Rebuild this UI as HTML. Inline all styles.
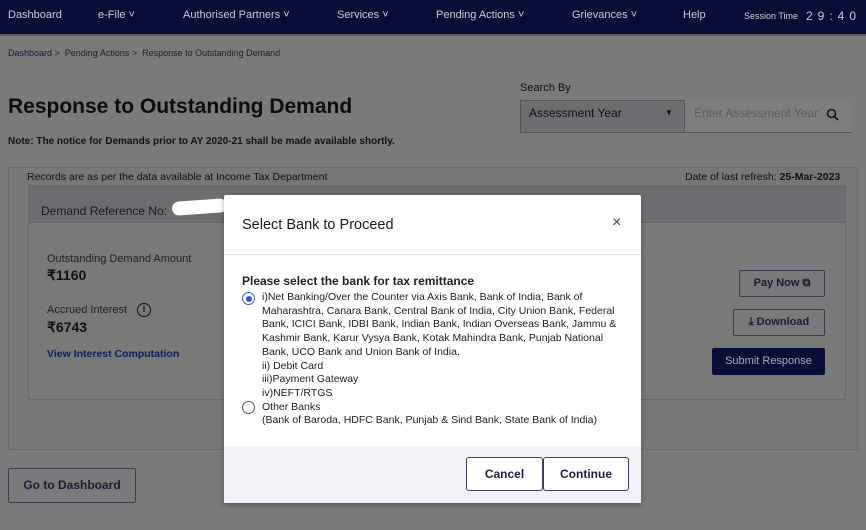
<!DOCTYPE html>
<html><head><meta charset="utf-8"><style>
*{box-sizing:border-box;margin:0;padding:0}
body{width:866px;height:530px;overflow:hidden;background:#7a7a7a;font-family:"Liberation Sans",sans-serif;color:#111;position:relative;font-size:11px}
.a{position:absolute;white-space:nowrap}
.nav{position:absolute;left:0;top:0;width:866px;height:34px;background:#0a0c38;color:#c9cbd6;font-size:11px}
.nav span{position:absolute;top:9px}
.panel{position:absolute;left:8px;top:167px;width:850px;height:283px;background:#777;border:1px solid #6c6c6c}
.card{position:absolute;left:28px;top:185px;width:818px;height:215px;border:1px solid #6a6a6a;background:#797979}
.ch{position:absolute;left:0;top:0;width:100%;height:37px;background:#6d6d71;border-bottom:1px solid #666}
.btn{position:absolute;border:1px solid #3a3d52;border-radius:2px;font-size:11px;font-weight:bold;color:#1a1d33;text-align:center}
.modal{position:absolute;left:224px;top:195px;width:417px;height:308px;background:#fff;border-radius:2px;box-shadow:0 2px 6px rgba(0,0,0,.3)}
.mf{position:absolute;left:0;top:251px;width:100%;height:57px;background:#f2f3f8}
.mb{position:absolute;top:262px;height:34px;border:1px solid #3b3f66;border-radius:3px;background:#fff;font-size:12px;font-weight:bold;color:#1b1f44;text-align:center;line-height:32px}
.radio{position:absolute;width:13px;height:13px;border:1px solid #555;border-radius:50%;background:#fff}
</style></head><body>
<div class="nav">
<span style="left:8px">Dashboard</span><span style="left:98px">e-File ˅</span><span style="left:183px">Authorised Partners ˅</span><span style="left:337px">Services ˅</span><span style="left:436px">Pending Actions ˅</span><span style="left:572px">Grievances ˅</span><span style="left:683px">Help</span><span style="left:744px;font-size:9px;top:11px">Session Time</span><span style="left:806px;font-size:12px;letter-spacing:5px">29:40</span>
</div>
<div style="position:absolute;left:0;top:34px;width:866px;height:2px;background:#5a5a68"></div>
<div class="a" style="left:8px;top:48px;font-size:9px;color:#222"><span style="color:#0e1a4a">Dashboard</span> &gt;&nbsp; Pending Actions &gt;&nbsp; Response to Outstanding Demand</div>
<div class="a" style="left:8px;top:95px;font-size:21px;font-weight:bold;color:#0c0c10">Response to Outstanding Demand</div>
<div class="a" style="left:8px;top:136px;font-size:10px;font-weight:bold">Note: The notice for Demands prior to AY 2020-21 shall be made available shortly.</div>
<div class="a" style="left:520px;top:82px;font-size:11px">Search By</div>
<div style="position:absolute;left:520px;top:100px;width:165px;height:33px;background:#6e6e72;border:1px solid #555"></div>
<div class="a" style="left:529px;top:106px;font-size:12px">Assessment Year</div>
<div class="a" style="left:665px;top:108px;font-size:8px">▼</div>
<div style="position:absolute;left:685px;top:100px;width:167px;height:33px;background:#7d7d7d;border-bottom:1px solid #555"></div>
<div class="a" style="left:694px;top:106px;font-size:12px;color:#5e5e5e">Enter Assessment Year</div>
<svg class="a" style="left:826px;top:108px" width="14" height="14" viewBox="0 0 14 14"><circle cx="5.5" cy="5.5" r="4" fill="none" stroke="#111" stroke-width="1.5"/><path d="M8.5 8.5 L12 12" stroke="#111" stroke-width="1.6"/></svg>
<div class="panel"></div>
<div class="a" style="left:27px;top:171px;font-size:10.5px">Records are as per the data available at Income Tax Department</div>
<div class="a" style="left:685px;top:171px;font-size:10.5px">Date of last refresh: <b>25-Mar-2023</b></div>
<div class="card"><div class="ch"></div></div>
<div class="a" style="left:41px;top:204px;font-size:12px;color:#1a1a1a">Demand Reference No:</div>
<div style="position:absolute;left:172px;top:200px;width:55px;height:14px;background:#fff;border-radius:8px;transform:rotate(-4deg)"></div>
<div class="a" style="left:47px;top:253px;font-size:11px;color:#222">Outstanding Demand Amount</div>
<div class="a" style="left:47px;top:267px;font-size:14px;font-weight:bold">₹1160</div>
<div class="a" style="left:47px;top:304px;font-size:11px;color:#222">Accrued Interest</div>
<div style="position:absolute;left:137px;top:303px;width:14px;height:14px;border:1.5px solid #111;border-radius:50%;font-size:9px;text-align:center;line-height:11px;font-weight:bold">i</div>
<div class="a" style="left:47px;top:319px;font-size:14px;font-weight:bold">₹6743</div>
<div class="a" style="left:47px;top:348px;font-size:10.5px;font-weight:bold;color:#0f1d5c">View Interest Computation</div>
<div class="btn" style="left:739px;top:270px;width:86px;height:27px;line-height:25px">Pay Now ⧉</div>
<div class="btn" style="left:733px;top:309px;width:92px;height:27px;line-height:25px">⤓ Download</div>
<div class="btn" style="left:712px;top:348px;width:113px;height:27px;line-height:25px;background:#0a0c38;color:#aab;border-color:#0a0c38;font-weight:normal">Submit Response</div>
<div class="btn" style="left:8px;top:468px;width:128px;height:35px;line-height:33px;font-size:12px">Go to Dashboard</div>
<div class="modal">
<div class="a" style="left:18px;top:22px;font-size:14.5px;color:#1c1c1c">Select Bank to Proceed</div>
<div class="a" style="left:388px;top:19px;font-size:16px;color:#444">×</div>
<div style="position:absolute;left:0;top:59px;width:100%;height:1px;background:#e3e3e3"></div>
<div class="a" style="left:18px;top:79px;font-size:12px;font-weight:bold;color:#222">Please select the bank for tax remittance</div>
<div class="radio" style="left:18px;top:97px;border-color:#3b5bd0"><div style="position:absolute;left:2.5px;top:2.5px;width:6px;height:6px;border-radius:50%;background:#2f55d4"></div></div>
<div class="a" style="left:38px;top:96px;font-size:10.5px;line-height:13.7px;color:#222;white-space:normal;width:366px">i)Net Banking/Over the Counter via Axis Bank, Bank of India, Bank of Maharashtra, Canara Bank, Central Bank of India, City Union Bank, Federal Bank, ICICI Bank, IDBI Bank, Indian Bank, Indian Overseas Bank, Jammu &amp; Kashmir Bank, Karur Vysya Bank, Kotak Mahindra Bank, Punjab National Bank, UCO Bank and Union Bank of India.<br>ii) Debit Card<br>iii)Payment Gateway<br>iv)NEFT/RTGS<br>Other Banks<br>(Bank of Baroda, HDFC Bank, Punjab &amp; Sind Bank, State Bank of India)</div>
<div class="radio" style="left:18px;top:206px"></div>
<div class="mf"></div>
<div class="mb" style="left:242px;width:77px">Cancel</div>
<div class="mb" style="left:319px;width:86px">Continue</div>
</div>
</body></html>
